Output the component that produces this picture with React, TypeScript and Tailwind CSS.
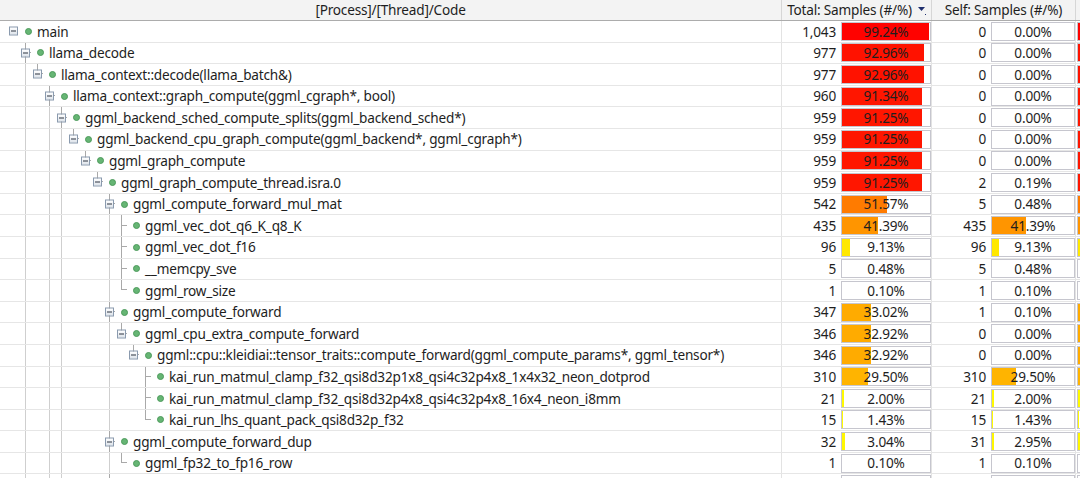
import type { CSSProperties } from "react";

interface Row {
  name: string;
  level: number;
  total: string;
  pct: number;
  self: string;
  selfPct: number;
  // node has more siblings below the visible area
  more?: boolean;
  // row is cut by the bottom of the window, only its boxes peek in
  partial?: boolean;
}

const rows: Row[] = [
  { name: "main", level: 0, total: "1,043", pct: 99.24, self: "0", selfPct: 0 },
  { name: "llama_decode", level: 1, total: "977", pct: 92.96, self: "0", selfPct: 0, more: true },
  { name: "llama_context::decode(llama_batch&)", level: 2, total: "977", pct: 92.96, self: "0", selfPct: 0 },
  { name: "llama_context::graph_compute(ggml_cgraph*, bool)", level: 3, total: "960", pct: 91.34, self: "0", selfPct: 0, more: true },
  { name: "ggml_backend_sched_compute_splits(ggml_backend_sched*)", level: 4, total: "959", pct: 91.25, self: "0", selfPct: 0, more: true },
  { name: "ggml_backend_cpu_graph_compute(ggml_backend*, ggml_cgraph*)", level: 5, total: "959", pct: 91.25, self: "0", selfPct: 0 },
  { name: "ggml_graph_compute", level: 6, total: "959", pct: 91.25, self: "0", selfPct: 0 },
  { name: "ggml_graph_compute_thread.isra.0", level: 7, total: "959", pct: 91.25, self: "2", selfPct: 0.19 },
  { name: "ggml_compute_forward_mul_mat", level: 8, total: "542", pct: 51.57, self: "5", selfPct: 0.48 },
  { name: "ggml_vec_dot_q6_K_q8_K", level: 9, total: "435", pct: 41.39, self: "435", selfPct: 41.39 },
  { name: "ggml_vec_dot_f16", level: 9, total: "96", pct: 9.13, self: "96", selfPct: 9.13 },
  { name: "__memcpy_sve", level: 9, total: "5", pct: 0.48, self: "5", selfPct: 0.48 },
  { name: "ggml_row_size", level: 9, total: "1", pct: 0.1, self: "1", selfPct: 0.1 },
  { name: "ggml_compute_forward", level: 8, total: "347", pct: 33.02, self: "1", selfPct: 0.1 },
  { name: "ggml_cpu_extra_compute_forward", level: 9, total: "346", pct: 32.92, self: "0", selfPct: 0 },
  { name: "ggml::cpu::kleidiai::tensor_traits::compute_forward(ggml_compute_params*, ggml_tensor*)", level: 10, total: "346", pct: 32.92, self: "0", selfPct: 0 },
  { name: "kai_run_matmul_clamp_f32_qsi8d32p1x8_qsi4c32p4x8_1x4x32_neon_dotprod", level: 11, total: "310", pct: 29.5, self: "310", selfPct: 29.5 },
  { name: "kai_run_matmul_clamp_f32_qsi8d32p4x8_qsi4c32p4x8_16x4_neon_i8mm", level: 11, total: "21", pct: 2.0, self: "21", selfPct: 2.0 },
  { name: "kai_run_lhs_quant_pack_qsi8d32p_f32", level: 11, total: "15", pct: 1.43, self: "15", selfPct: 1.43 },
  { name: "ggml_compute_forward_dup", level: 8, total: "32", pct: 3.04, self: "31", selfPct: 2.95 },
  { name: "ggml_fp32_to_fp16_row", level: 9, total: "1", pct: 0.1, self: "1", selfPct: 0.1 },
  { name: "", level: 8, total: "", pct: 0.1, self: "", selfPct: 0.1, partial: true },
];

function hasLaterSibling(i: number): boolean {
  const lvl = rows[i].level;
  for (let j = i + 1; j < rows.length; j++) {
    if (rows[j].level < lvl) return false;
    if (rows[j].level === lvl) return true;
  }
  return !!rows[i].more;
}

function ancestorAt(i: number, lvl: number): number {
  for (let j = i; j >= 0; j--) if (rows[j].level === lvl) return j;
  return -1;
}

// hue runs from yellow (0%) to red (100%)
function barColor(p: number) {
  return `hsl(${60 * (1 - p / 100)}, 100%, 50%)`;
}

function Bar({ pct, inner, label = true }: { pct: number; inner: number; label?: boolean }) {
  const fill: CSSProperties = {
    width: `${Math.round((pct / 100) * inner)}px`,
    background: barColor(pct),
  };
  const box: CSSProperties = { width: `${inner + 2}px` };
  return (
    <div
      className="relative flex h-[19px] shrink-0 items-center justify-center border border-[#c6c6ce] bg-white"
      style={box}
    >
      <div className="absolute inset-y-0 left-0" style={fill} />
      {label && <span className="relative">{pct.toFixed(2)}%</span>}
    </div>
  );
}

function TreeCell({ i }: { i: number }) {
  const row = rows[i];
  const isParent = (rows[i + 1]?.level ?? -1) > row.level;
  const later = hasLaterSibling(i);
  const guides = [];
  for (let k = 0; k < row.level; k++) {
    const cont = k > 0 && hasLaterSibling(ancestorAt(i, k));
    guides.push(
      <div key={k} className="h-full w-[12px] shrink-0">
        {cont && <div className="ml-[6px] h-full border-l border-[#cfcfcf]" />}
      </div>
    );
  }
  return (
    <div className="flex h-full w-[782px] shrink-0 items-center overflow-hidden border-r border-[#e3e3e3] pl-[7px]">
      {guides}
      <div className="relative flex h-full w-[12px] shrink-0 flex-col">
        {row.level > 0 && (
          <>
            <div className="ml-[6px] h-1/2 w-[6px] border-b border-l border-[#a9a9a9]" />
            {later && <div className="ml-[6px] h-1/2 border-l border-[#a9a9a9]" />}
          </>
        )}
        {isParent && (
          <div className="absolute left-[2px] top-1/2 flex h-[9px] w-[9px] -translate-y-1/2 items-center justify-center border border-[#8a9aae] bg-gradient-to-b from-white to-[#dde3ea]">
            <div className="h-[1px] w-[5px] bg-[#2c3440]" />
          </div>
        )}
      </div>
      {!row.partial && (
        <>
          <div className="ml-[6px] h-[7px] w-[7px] shrink-0 rounded-full border border-[#4c9a5b] bg-[#66b574]" />
          <span className="ml-[5px] whitespace-nowrap">{row.name}</span>
        </>
      )}
    </div>
  );
}

export default function App() {
  return (
    <div className="h-screen w-full overflow-hidden bg-white font-['Segoe_UI','Noto_Sans',sans-serif] text-[13.6px] leading-none tracking-[-0.2px] text-[#1e1e1e]">
      {/* Header */}
      <div className="flex h-[21px] border-b border-[#acacac] bg-[#f3f3f3]">
        <div className="flex w-[782px] shrink-0 items-center justify-center border-r border-[#d6d6d6]">
          [Process]/[Thread]/Code
        </div>
        <div className="flex w-[150px] shrink-0 items-center justify-center gap-[6px] border-r border-[#d6d6d6]">
          <span>Total: Samples (#/%)</span>
          <svg width="8" height="10" viewBox="0 0 8 10">
            <polygon points="0,2 7,2 3.5,6" fill="#1f2f6e" />
            <rect x="7" y="9" width="1" height="1" fill="#1f2f6e" />
          </svg>
        </div>
        <div className="flex w-[144px] shrink-0 items-center justify-center border-r border-[#d6d6d6]">
          Self: Samples (#/%)
        </div>
        <div className="flex-1" />
      </div>

      {/* Rows */}
      {rows.map((r, i) => (
        <div key={i} className="flex h-[21.6px] items-stretch border-b border-[#e6e6e6]">
          <TreeCell i={i} />
          <div className="flex w-[150px] shrink-0 items-center border-r border-[#e3e3e3]">
            <span className="w-[54px] text-right">{r.total}</span>
            <div className="ml-[5px]">
              <Bar pct={r.pct} inner={88} label={!r.partial} />
            </div>
          </div>
          <div className="flex w-[144px] shrink-0 items-center border-r border-[#e3e3e3]">
            <span className="w-[54px] text-right">{r.self}</span>
            <div className="ml-[5px]">
              <Bar pct={r.selfPct} inner={82} label={!r.partial} />
            </div>
          </div>
          <div className="flex flex-1 items-center overflow-hidden pl-[1px]">
            <Bar pct={r.pct} inner={88} label={false} />
          </div>
        </div>
      ))}
    </div>
  );
}
